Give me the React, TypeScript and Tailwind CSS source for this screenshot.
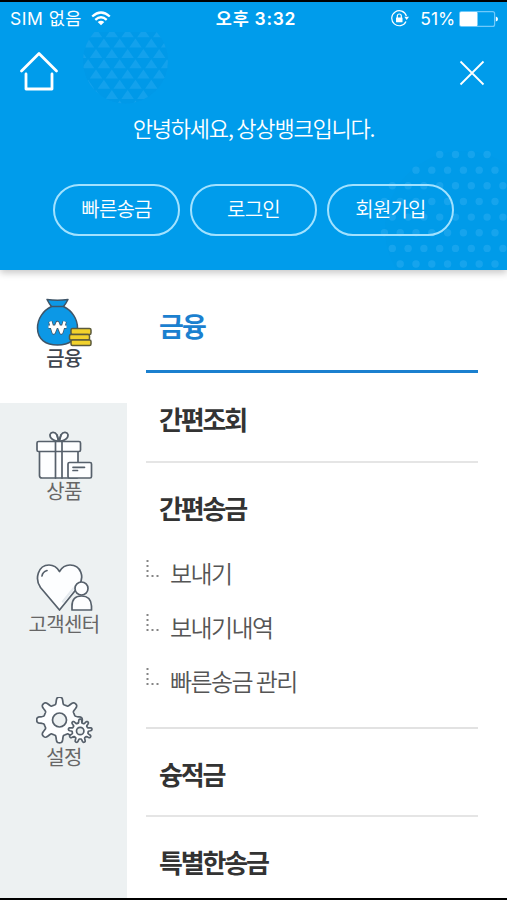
import React from "react";

const INK = "#56606b";

function gearPath(cx: number, cy: number, inner: number, outer: number, teeth: number) {
  const mid = (inner + outer) / 2;
  const amp = (outer - inner) / 2;
  const steps = teeth * 24;
  const pts: string[] = [];
  for (let i = 0; i < steps; i++) {
    const a = (i / steps) * Math.PI * 2;
    const r = mid + amp * Math.tanh(2.3 * (Math.cos(a * teeth) - 0.22));
    pts.push(`${(cx + r * Math.sin(a)).toFixed(2)} ${(cy - r * Math.cos(a)).toFixed(2)}`);
  }
  return `M${pts.join("L")}Z`;
}

function MoneyIcon() {
  return (
    <svg width="58" height="50" viewBox="0 0 58 50" fill="none" stroke="#3f5568" strokeWidth="1.5" strokeLinejoin="round">
      <path d="M11 1.5Q21.500 3 32 1.500Q30 5.500 27.500 8.500C36 12.500 41.500 21 41.500 30C41.500 41.500 33 47 21.500 47S1.500 41.500 1.500 30C1.500 21 7 12.500 15.500 8.500Q13 5.500 11 1.500Z" fill="#0c98e6" />
      <path d="M15.500 8.500H27.500" />
      <path d="M14.300 23.500L17.700 34.500L21.500 25L25.300 34.500L28.700 23.500M12.500 28.700H30.500" stroke="#456" strokeWidth="4.200" />
      <path d="M14.300 23.500L17.700 34.500L21.500 25L25.300 34.500L28.700 23.500M12.500 28.700H30.500" stroke="#fff" strokeWidth="2.600" />
      <rect x="35" y="30.500" width="20" height="6" rx="1.500" fill="#f2d22c" stroke="#5b5a3c" />
      <rect x="33.500" y="36.500" width="20" height="5.500" rx="1.500" fill="#f2d22c" stroke="#5b5a3c" />
      <rect x="35" y="42" width="20" height="5.500" rx="1.500" fill="#f2d22c" stroke="#5b5a3c" />
    </svg>
  );
}

function GiftIcon() {
  return (
    <svg width="58" height="50" viewBox="0 0 58 50" fill="#fdfeff" stroke={INK} strokeWidth="1.700" strokeLinejoin="round" strokeLinecap="round">
      <path d="M3.500 20H42V45Q42 47 40 47H6Q3.500 47 3.500 44.500Z" />
      <rect x="1" y="10.500" width="43.500" height="10" rx="1.500" />
      <path d="M19.500 10.500V47M26 10.500V47" fill="none" />
      <path d="M22.500 10C18 10.500 13.500 7 14 3.500C15 .5 19 .5 21 4ZM23.500 10C28 10.500 32.500 7 32 3.500C31 .5 27 .5 25 4Z" />
      <path d="M21 4L22.700 10L25 4" fill="none" />
      <rect x="32" y="31.500" width="23.500" height="15.500" rx="1.500" />
      <path d="M37 36.300H48.500M37 39.500H41.500" fill="none" />
    </svg>
  );
}

function HeartIcon() {
  return (
    <svg width="58" height="50" viewBox="0 0 58 50" fill="#fdfeff" stroke={INK} strokeWidth="1.700" strokeLinejoin="round" strokeLinecap="round">
      <path d="M23.500 46L4.500 23.500C-1.500 15 2 1 13 1C18 1 21.500 4 23.500 7.500C25.500 4 29 1 34 1C45 1 49 13 42.500 22.500L23.500 46Z" />
      <path d="M6 12Q6.500 8 11 6.500" fill="none" />
      <path d="M27 37.500L37.500 24.500" stroke="#e6ebef" strokeWidth="2.500" />
      <circle cx="45.500" cy="24.500" r="6.500" />
      <path d="M36 46V42Q36 32 45.500 32T55.500 42V46Z" />
    </svg>
  );
}

function GearsIcon() {
  return (
    <svg width="58" height="50" viewBox="0 0 58 50" fill="#fdfeff" stroke={INK} strokeWidth="1.700" strokeLinejoin="round">
      <path d={gearPath(23.5, 23, 15.8, 23, 8)} />
      <circle cx="23.500" cy="23" r="7" fill="#edf1f2" />
      <path d={gearPath(44.2, 34, 8, 12, 9)} />
      <circle cx="44.200" cy="34" r="3.700" fill="#edf1f2" />
    </svg>
  );
}

const tabs = [
  { label: "금융", icon: <MoneyIcon />, active: true },
  { label: "상품", icon: <GiftIcon />, active: false },
  { label: "고객센터", icon: <HeartIcon />, active: false },
  { label: "설정", icon: <GearsIcon />, active: false },
];

function HeaderPattern() {
  const triangles: React.ReactNode[] = [];
  for (let row = 0; row < 8; row++) {
    for (let col = 0; col < 7; col++) {
      const x = 74 + col * 15.8 + (row % 2) * 7.9;
      const y = 28 + row * 10.3;
      triangles.push(<path key={`${row}-${col}`} d={`M${x} ${y + 9.3}l6.200 -9l6.200 9z`} />);
    }
  }
  const dots: React.ReactNode[] = [];
  for (let row = 0; row < 8; row++) {
    for (let col = 0; col < 9; col++) {
      const x = 376.5 + col * 15.8 + (row % 2) * 7.9;
      const y = 154.5 + row * 15.65;
      if (Math.hypot(x - 458, y - 229) < 80) dots.push(<circle key={`${row}-${col}`} cx={x} cy={y} r="3.700" />);
    }
  }
  return (
    <svg className="absolute inset-0" width="507" height="270" viewBox="0 0 507 270">
      <defs>
        <clipPath id="ball">
          <path d="M83 32H168V104H83Z" />
        </clipPath>
        <clipPath id="disc">
          <circle cx="125.500" cy="61" r="42.500" />
        </clipPath>
      </defs>
      <g clipPath="url(#ball)">
        <circle cx="125.500" cy="61" r="42.500" fill="#0878c8" opacity=".07" />
        <g clipPath="url(#disc)" fill="#35b0f4" opacity=".36">{triangles}</g>
      </g>
      <circle cx="463" cy="229" r="78" fill="#0878c8" opacity=".03" />
      <g fill="#3bb4f5" opacity=".38">{dots}</g>
    </svg>
  );
}

function StatusBar() {
  return (
    <div className="grid h-[33px] grid-cols-3 items-center pr-[9px] pl-[10px] font-[Inter,'Noto_Sans_CJK_KR',sans-serif] text-[17.5px] leading-none">
      <div className="flex items-center gap-[9px]">
        <span className="tracking-[0.5px] whitespace-nowrap">SIM 없음</span>
        <svg width="20" height="15" viewBox="0 0 20 15" fill="none" stroke="#fff" strokeWidth="2.300">
          <path d="M1.200 5.500Q10 -2.500 18.800 5.500M4.300 8.800Q10 3.600 15.700 8.800" />
          <path d="M10 14.300L6.700 11Q10 8.300 13.300 11Z" fill="#fff" stroke="none" />
        </svg>
      </div>
      <div className="pl-[4px] text-center font-semibold tracking-[0.7px] whitespace-nowrap">오후 3:32</div>
      <div className="flex items-center justify-end">
        <svg width="18" height="17" viewBox="0 0 18 17" fill="none" stroke="#fff" strokeWidth="1.200">
          <path d="M15.400 6A7.500 7.500 0 1 0 15 11.500" />
          <path d="M13.300 6.700H18L15.700 10Z" fill="#fff" stroke="none" />
          <rect x="5" y="7.500" width="6.500" height="4.800" rx=".5" fill="#fff" stroke="none" />
          <path d="M6.300 8V6a2 2 0 0 1 4 0V8" />
        </svg>
        <span className="ml-[11px] tracking-[-0.1px]">51%</span>
        <svg className="ml-[4px]" width="39" height="16" viewBox="0 0 39 16">
          <rect x=".6" y=".6" width="35" height="14.800" rx="2" fill="none" stroke="#6fc9fa" strokeWidth="1.200" />
          <rect x="1" y="1" width="17.500" height="14" rx="1" fill="#fff" />
          <path d="M36.800 5.500Q39 6 39 8T36.800 10.500Z" fill="#fff" />
        </svg>
      </div>
    </div>
  );
}

function Branch() {
  return (
    <svg className="mt-[-9px] shrink-0" width="14" height="18" viewBox="0 0 14 18" fill="#858585">
      <rect x="0.500" y="0" width="2" height="2" />
      <rect x="0.500" y="5" width="2" height="2" />
      <rect x="0.500" y="10" width="2" height="2" />
      <rect x="0.500" y="15" width="2" height="2" />
      <rect x="5.500" y="15" width="2" height="2" />
      <rect x="10.500" y="15" width="2" height="2" />
    </svg>
  );
}

function Heading({ children }: { children: React.ReactNode }) {
  return <h2 className="flex h-[87px] items-center pt-[3px] pl-[13px] text-[26px] leading-none font-bold tracking-[-2.2px] text-[#333]">{children}</h2>;
}

export default function App() {
  return (
    <div className="flex h-[900px] w-[507px] flex-col overflow-hidden border-t-2 border-b-2 border-black bg-white font-['Noto_Sans_CJK_KR',sans-serif]">
      <header className="relative z-10 h-[268px] shrink-0 bg-[#009ceb] text-white shadow-[0_3px_7px_rgba(0,0,0,0.22)]">
        <div className="absolute inset-x-0 top-[-2px] h-[270px] overflow-hidden">
          <HeaderPattern />
        </div>
        <div className="relative">
          <StatusBar />
          <div className="flex justify-between pt-[14px] pr-[22px] pl-[19px]">
            <svg width="40" height="42" viewBox="0 0 40 42" fill="none" stroke="#fff" strokeWidth="2.800" strokeLinecap="round" strokeLinejoin="round">
              <path d="M2.500 22L20 4.500L37.500 22M7 25V40H33V25" />
            </svg>
            <svg className="mt-[11px]" width="26" height="26" viewBox="0 0 26 26" stroke="#fff" strokeWidth="1.800">
              <path d="M1.500 1.500L24.500 24.500M24.500 1.500L1.500 24.500" />
            </svg>
          </div>
          <p className="mt-[22px] text-center text-[22px] leading-[28px] font-[350] tracking-[-1.2px]">안녕하세요, 상상뱅크입니다.</p>
          <div className="mt-[43px] flex justify-center gap-[10px]">
            {["빠른송금", "로그인", "회원가입"].map((label) => (
              <button key={label} className="h-[52px] w-[127px] rounded-full border-2 border-[#a2e2ff] pb-[3px] text-[20px] leading-none font-[350] tracking-[-0.8px]">
                {label}
              </button>
            ))}
          </div>
        </div>
      </header>
      <div className="flex min-h-0 flex-1">
        <nav className="w-[127px] shrink-0 bg-[#edf1f2]">
          {tabs.map((tab) => (
            <div key={tab.label} className={tab.active ? "flex h-[133px] flex-col items-center bg-white pt-[28px] font-medium text-[#3f4650]" : "flex h-[133px] flex-col items-center pt-[28px] text-[#666]"}>
              <div className="ml-[2px]">{tab.icon}</div>
              <span className="-mt-px ml-px text-[20px] leading-[22px] tracking-[-0.7px]">{tab.label}</span>
            </div>
          ))}
        </nav>
        <main className="flex-1 pr-[29px] pl-[19px]">
          <h1 className="flex h-[103px] items-center border-b-3 border-[#1b80cf] pt-[11px] pl-[13px] text-[27px] leading-none font-bold tracking-[-1.800px] text-[#1b80cf]">금융</h1>
          <section className="border-b-2 border-[#e5e5e5] pt-px">
            <Heading>간편조회</Heading>
          </section>
          <section className="h-[266px] border-b-2 border-[#e2e2e2]">
            <Heading>간편송금</Heading>
            <ul className="-mt-[4px]">
              {["보내기", "보내기내역", "빠른송금 관리"].map((item) => (
                <li key={item} className="flex h-[54px] items-center gap-[10px] text-[24px] leading-none font-[350] tracking-[-1.6px] text-[#555]">
                  <Branch />
                  <span>{item}</span>
                </li>
              ))}
            </ul>
          </section>
          <section className="h-[88px] border-b-2 border-[#e5e5e5]">
            <Heading>슝적금</Heading>
          </section>
          <Heading>특별한송금</Heading>
        </main>
      </div>
    </div>
  );
}
